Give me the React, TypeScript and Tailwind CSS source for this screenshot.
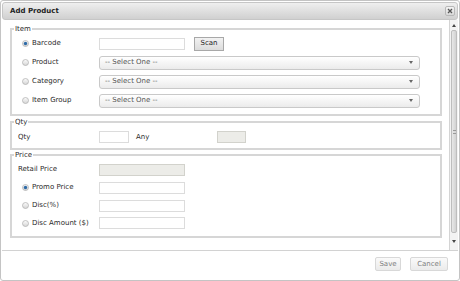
import React from 'react';

const Radio: React.FC<{ checked?: boolean }> = ({ checked }) => (
  <svg width="7" height="7" viewBox="0 0 7 7" className="shrink-0">
    <defs>
      <linearGradient id={checked ? 'rg-on' : 'rg-off'} x1="0" y1="0" x2="0" y2="1">
        <stop offset="0" stopColor="#fdfdfd" />
        <stop offset="1" stopColor="#d4d4d4" />
      </linearGradient>
    </defs>
    <circle cx="3.5" cy="3.5" r="3" fill={`url(#${checked ? 'rg-on' : 'rg-off'})`} stroke="#b4b4b4" strokeWidth="0.8" />
    {checked && <circle cx="3.5" cy="3.5" r="1.7" fill="#2d6aa6" />}
  </svg>
);

const TextBox: React.FC<{ w: string; disabled?: boolean }> = ({ w, disabled }) => (
  <input
    type="text"
    readOnly
    className={`${w} h-[12px] border outline-none ${
      disabled ? 'border-[#d2d2cc] bg-[#ecece8]' : 'border-[#dcdcdc] bg-white'
    }`}
  />
);

const SelectBox = () => (
  <div className="flex h-[14px] w-[321px] items-center justify-between rounded-[3px] border border-[#c9c9c9] bg-gradient-to-b from-white to-[#ebebeb] pl-[5px] pr-[6px] text-[#555]">
    <span>-- Select One --</span>
    <svg width="4" height="3" viewBox="0 0 4 3">
      <path d="M0 0h4L2 3z" fill="#666" />
    </svg>
  </div>
);

const Label: React.FC<{ children: React.ReactNode; radio?: boolean; checked?: boolean }> = ({
  children,
  radio,
  checked
}) => (
  <div className={`flex w-[87px] shrink-0 items-center gap-[3px] ${radio ? 'pl-[10px]' : 'pl-[6px]'}`}>
    {radio && <Radio checked={checked} />}
    <span className="text-[#2a2a2a]">{children}</span>
  </div>
);

export default function App() {
  return (
    <div className="h-[281px] w-[460px] bg-white font-['DejaVu_Sans',sans-serif] text-[7px] leading-[9px]">
      <div className="flex h-full flex-col rounded-[3px] border border-[#c4c4c4] p-[1px]">
        {/* title bar */}
        <div className="flex h-[18px] shrink-0 items-center justify-between rounded-[3px] border border-[#c6c6c6] bg-gradient-to-b from-[#efefef] to-[#d0d0d0] pl-[7px] pr-[2px]">
          <span className="font-bold text-[#222]">Add Product</span>
          <div className="flex h-[10px] w-[10px] items-center justify-center rounded-[2px] border border-[#b8b8b8] bg-gradient-to-b from-[#f4f4f4] to-[#d8d8d8]">
            <svg width="6" height="6" viewBox="0 0 6 6">
              <path d="M1 1l4 4M5 1L1 5" stroke="#555" strokeWidth="1.3" />
            </svg>
          </div>
        </div>

        {/* body */}
        <div className="flex h-[230px] shrink-0">
          <div className="flex-1 pl-[8px] pr-[7px] pt-[4px]">
            <fieldset className="border-2 border-[#d6d6d6] pb-[4px]">
              <legend className="ml-[2px] px-[1px] leading-[10px] text-[#2a2a2a]">Item</legend>
              <div className="flex h-[19px] items-center">
                <Label radio checked>Barcode</Label>
                <TextBox w="w-[86px]" />
                <button className="ml-[9px] h-[14px] w-[30px] border border-[#a8a8a8] bg-gradient-to-b from-[#f2f2f2] to-[#dcdcdc] text-[#222]">
                  Scan
                </button>
              </div>
              <div className="flex h-[19px] items-center">
                <Label radio>Product</Label>
                <SelectBox />
              </div>
              <div className="flex h-[19px] items-center">
                <Label radio>Category</Label>
                <SelectBox />
              </div>
              <div className="flex h-[19px] items-center">
                <Label radio>Item Group</Label>
                <SelectBox />
              </div>
            </fieldset>

            <fieldset className="mt-[1px] border-2 border-[#d6d6d6] pb-[2px]">
              <legend className="ml-[2px] px-[1px] leading-[10px] text-[#2a2a2a]">Qty</legend>
              <div className="flex h-[19px] items-center pt-[1px]">
                <Label>Qty</Label>
                <TextBox w="w-[30px]" />
                <span className="ml-[7px] w-[81px] text-[#2a2a2a]">Any</span>
                <TextBox w="w-[29px]" disabled />
              </div>
            </fieldset>

            <fieldset className="border-2 border-[#d6d6d6] pb-[4px]">
              <legend className="ml-[2px] px-[1px] leading-[10px] text-[#2a2a2a]">Price</legend>
              <div className="flex h-[18px] items-center pt-[1px]">
                <Label>Retail Price</Label>
                <TextBox w="w-[86px]" disabled />
              </div>
              <div className="flex h-[18px] items-center pt-[1px]">
                <Label radio checked>Promo Price</Label>
                <TextBox w="w-[86px]" />
              </div>
              <div className="flex h-[18px] items-center pt-[1px]">
                <Label radio>Disc(%)</Label>
                <TextBox w="w-[86px]" />
              </div>
              <div className="flex h-[18px] items-center">
                <Label radio>Disc Amount ($)</Label>
                <TextBox w="w-[86px]" />
              </div>
            </fieldset>
          </div>

          {/* scrollbar */}
          <div className="flex w-[9px] shrink-0 flex-col border-l border-[#d4d4d4] bg-[#f3f3f3]">
            <div className="flex h-[10px] items-center justify-center">
              <svg width="4" height="3" viewBox="0 0 4 3">
                <path d="M0 3h4L2 0z" fill="#444" />
              </svg>
            </div>
            <div className="mx-[1px] flex h-[203px] items-center justify-center rounded-[2px] border border-[#bdbdbd] bg-gradient-to-r from-[#e8e8e8] to-[#d2d2d2]">
              <div className="h-[4px] w-[3px] border-y border-[#999]" />
            </div>
            <div className="flex flex-1 items-center justify-center">
              <svg width="4" height="3" viewBox="0 0 4 3">
                <path d="M0 0h4L2 3z" fill="#444" />
              </svg>
            </div>
          </div>
        </div>

        {/* footer */}
        <div className="flex flex-1 items-start justify-end gap-[9px] border-t border-[#d2d2d2] pr-[10px] pt-[6px]">
          <button className="h-[14px] w-[26px] rounded-[2px] border border-[#d8d8d8] bg-gradient-to-b from-[#fafafa] to-[#ebebeb] text-[#7e7e7e]">
            Save
          </button>
          <button className="h-[14px] w-[38px] rounded-[2px] border border-[#d8d8d8] bg-gradient-to-b from-[#fafafa] to-[#ebebeb] text-[#7e7e7e]">
            Cancel
          </button>
        </div>
      </div>
    </div>
  );
}
